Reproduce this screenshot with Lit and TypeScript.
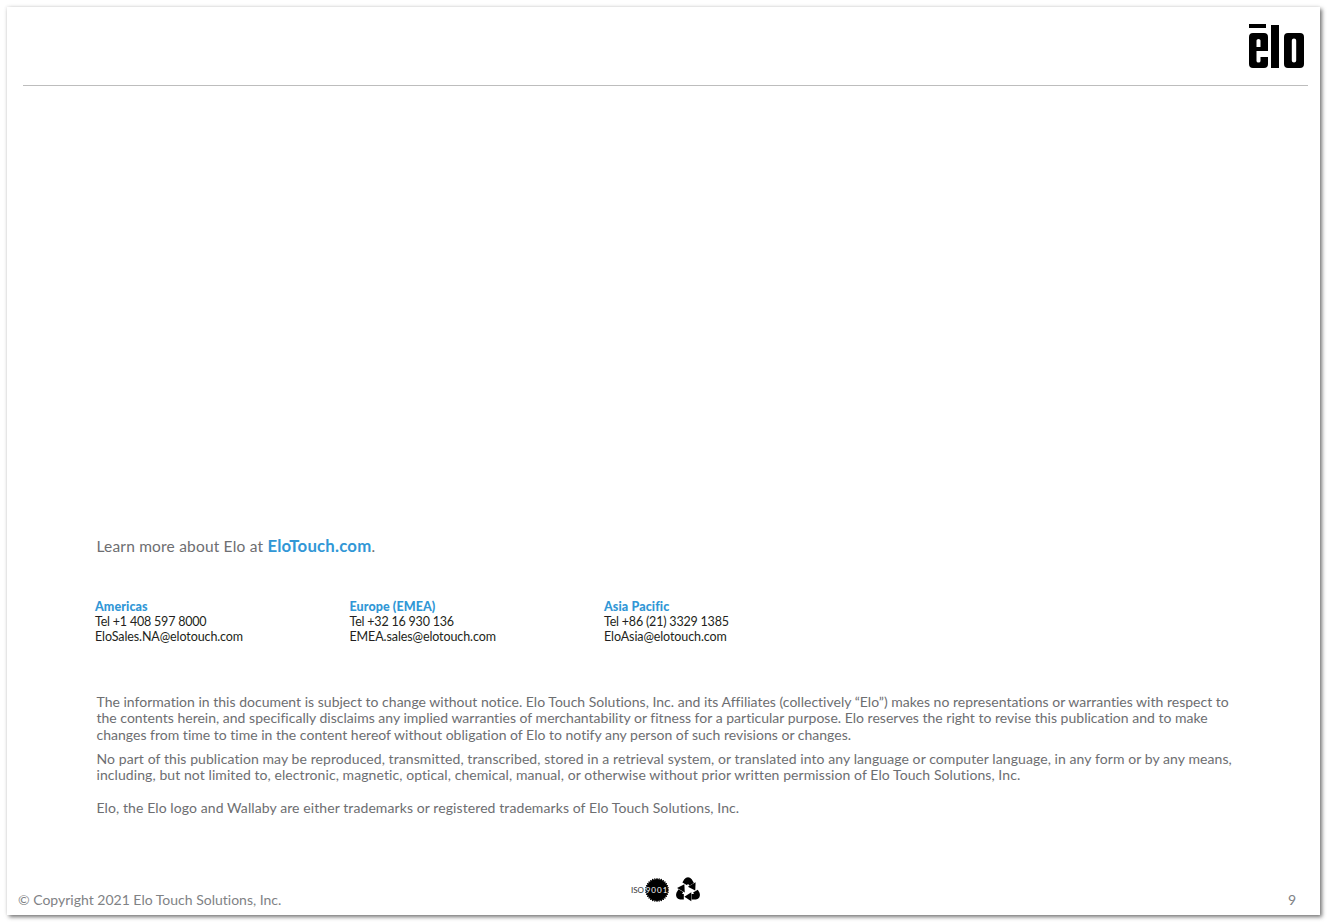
import { LitElement, html, css, svg } from "lit";
import { customElement } from "lit/decorators.js";

const regions = [
  { name: "Americas", tel: "Tel +1 408 597 8000", mail: "EloSales.NA@elotouch.com" },
  { name: "Europe (EMEA)", tel: "Tel +32 16 930 136", mail: "EMEA.sales@elotouch.com" },
  { name: "Asia Pacific", tel: "Tel +86 (21) 3329 1385", mail: "EloAsia@elotouch.com" },
];

const teeth = Array.from({ length: 32 }, (_, i) => {
  const a = (i / 32) * Math.PI * 2;
  return svg`<circle cx="${13 + Math.cos(a) * 11.3}" cy="${13 + Math.sin(a) * 11.3}" r="0.7" fill="#000"></circle>`;
});

const arrow = svg`<path d="M10 7.800 L11.500 5.200 Q13 3.400 14.500 5.200 L16.300 8.300" fill="none" stroke="#000" stroke-width="5"></path><path d="M20 6.400 L12.900 10.500 L19.700 14 Z" fill="#000"></path>`;

@customElement("app-root")
export class AppRoot extends LitElement {
  static styles = css`
    :host { display: block; width: 1327px; height: 922px; background: #fff; overflow: hidden; font-family: "Lato", sans-serif; font-variant-ligatures: none; }
    .sheet { margin: 7px 0 0 7px; width: 1313px; height: 908px; box-sizing: border-box; background: #fff; box-shadow: 2px 2px 4px rgba(0,0,0,.55), -1px -1px 3px rgba(0,0,0,.06); display: flex; flex-direction: column; padding: 0 12px 6px 16px; }
    .head { height: 78px; border-bottom: 1px solid #bdbdbd; display: flex; justify-content: flex-end; align-items: flex-start; flex: none; }
    .logo { width: 56px; height: 44px; margin-top: 17px; margin-right: 3px; display: block; }
    .body { padding-left: 74px; flex: 1; display: flex; flex-direction: column; }
    .learn { margin: 450px 0 0 -.5px; font-size: 15.5px; line-height: 20px; color: #6d6e71; letter-spacing: .19px; }
    .learn b { color: #3197d6; font-weight: 700; font-size: 16.8px; }
    .regions { margin: 43px 0 0 -2px; display: grid; grid-template-columns: 254.5px 254.5px 1fr; font-size: 12.5px; line-height: 15px; color: #231f20; }
    .regions b { display: block; color: #3197d6; font-weight: 900; letter-spacing: .1px; }
    .tel { display: block; letter-spacing: -.2px; }
    .mail { display: block; letter-spacing: -.1px; }
    .legal { margin: 50px 0 0 -.5px; width: 1150px; font-size: 14px; line-height: 16.4px; color: #6d6e71; }
    .legal p { margin: 0 0 8px; }
    .legal .p1 { letter-spacing: .01px; }
    .legal .p2 { line-height: 16px; margin-bottom: 16.8px; letter-spacing: .08px; }
    .legal .p3 { letter-spacing: .09px; }
    .foot { margin: 0 12px 0 -5px; display: grid; grid-template-columns: 613px auto 1fr; align-items: end; font-size: 14px; line-height: 18px; color: #808285; }
    .num { justify-self: end; }
    .marks { display: flex; align-items: center; gap: 5px; height: 26px; margin-bottom: 6px; }
    .iso { display: flex; align-items: center; font-size: 8px; line-height: 10px; color: #333; }
    .iso-label { width: 13px; white-space: nowrap; }
    .seal { position: relative; width: 26px; height: 26px; }
    .seal svg { display: block; }
    .seal span { position: absolute; inset: 0; display: flex; align-items: center; justify-content: center; color: #fff; font-size: 8px; letter-spacing: 1px; }
    .rec { width: 26px; height: 26px; display: block; }
  `;

  render() {
    return html`
      <div class="sheet">
        <div class="head">
          <svg class="logo" viewBox="0 0 56 44" aria-label="Elo">
            <rect x="0" y="0" width="17" height="4"></rect>
            <path fill-rule="evenodd" d="M4 9H15Q19 9 19 13V27H7.500V37Q7.500 38.500 9.500 38.500T11.500 37V33H19V40Q19 44 15 44H4Q0 44 0 40V13Q0 9 4 9ZM7.500 16.500V23H11.500V16.500Q11.500 15 9.500 15T7.500 16.500Z"></path>
            <rect x="22" y="1" width="8" height="43"></rect>
            <path fill-rule="evenodd" d="M39 9H51Q55 9 55 13V40Q55 44 51 44H39Q35 44 35 40V13Q35 9 39 9ZM42.800 16.500V36.500Q42.800 38.500 45 38.500T47.200 36.500V16.500Q47.200 14.500 45 14.500T42.800 16.500Z"></path>
          </svg>
        </div>
        <div class="body">
          <p class="learn">Learn more about Elo at <b>EloTouch.com</b>.</p>
          <div class="regions">
            ${regions.map((r) => html`<div><b>${r.name}</b><span class="tel">${r.tel}</span><span class="mail">${r.mail}</span></div>`)}
          </div>
          <div class="legal">
            <p class="p1">The information in this document is subject to change without notice. Elo Touch Solutions, Inc. and its Affiliates (collectively “Elo”) makes no representations or warranties with respect to the contents herein, and specifically disclaims any implied warranties of merchantability or fitness for a particular purpose. Elo reserves the right to revise this publication and to make changes from time to time in the content hereof without obligation of Elo to notify any person of such revisions or changes.</p>
            <p class="p2">No part of this publication may be reproduced, transmitted, transcribed, stored in a retrieval system, or translated into any language or computer language, in any form or by any means, including, but not limited to, electronic, magnetic, optical, chemical, manual, or otherwise without prior written permission of Elo Touch Solutions, Inc.</p>
            <p class="p3">Elo, the Elo logo and Wallaby are either trademarks or registered trademarks of Elo Touch Solutions, Inc.</p>
          </div>
        </div>
        <div class="foot">
          <span>© Copyright 2021 Elo Touch Solutions, Inc.</span>
          <div class="marks">
            <div class="iso"><span class="iso-label">ISO</span>
              <div class="seal">
                <svg width="26" height="26" viewBox="0 0 26 26"><circle cx="13" cy="13" r="11" fill="#000"></circle>${teeth}</svg>
                <span>9001</span>
              </div>
            </div>
            <svg class="rec" viewBox="1 1.500 24 24">
              ${arrow}
              <g transform="rotate(120 13 14)">${arrow}</g>
              <g transform="rotate(240 13 14)">${arrow}</g>
            </svg>
          </div>
          <span class="num">9</span>
        </div>
      </div>
    `;
  }
}
